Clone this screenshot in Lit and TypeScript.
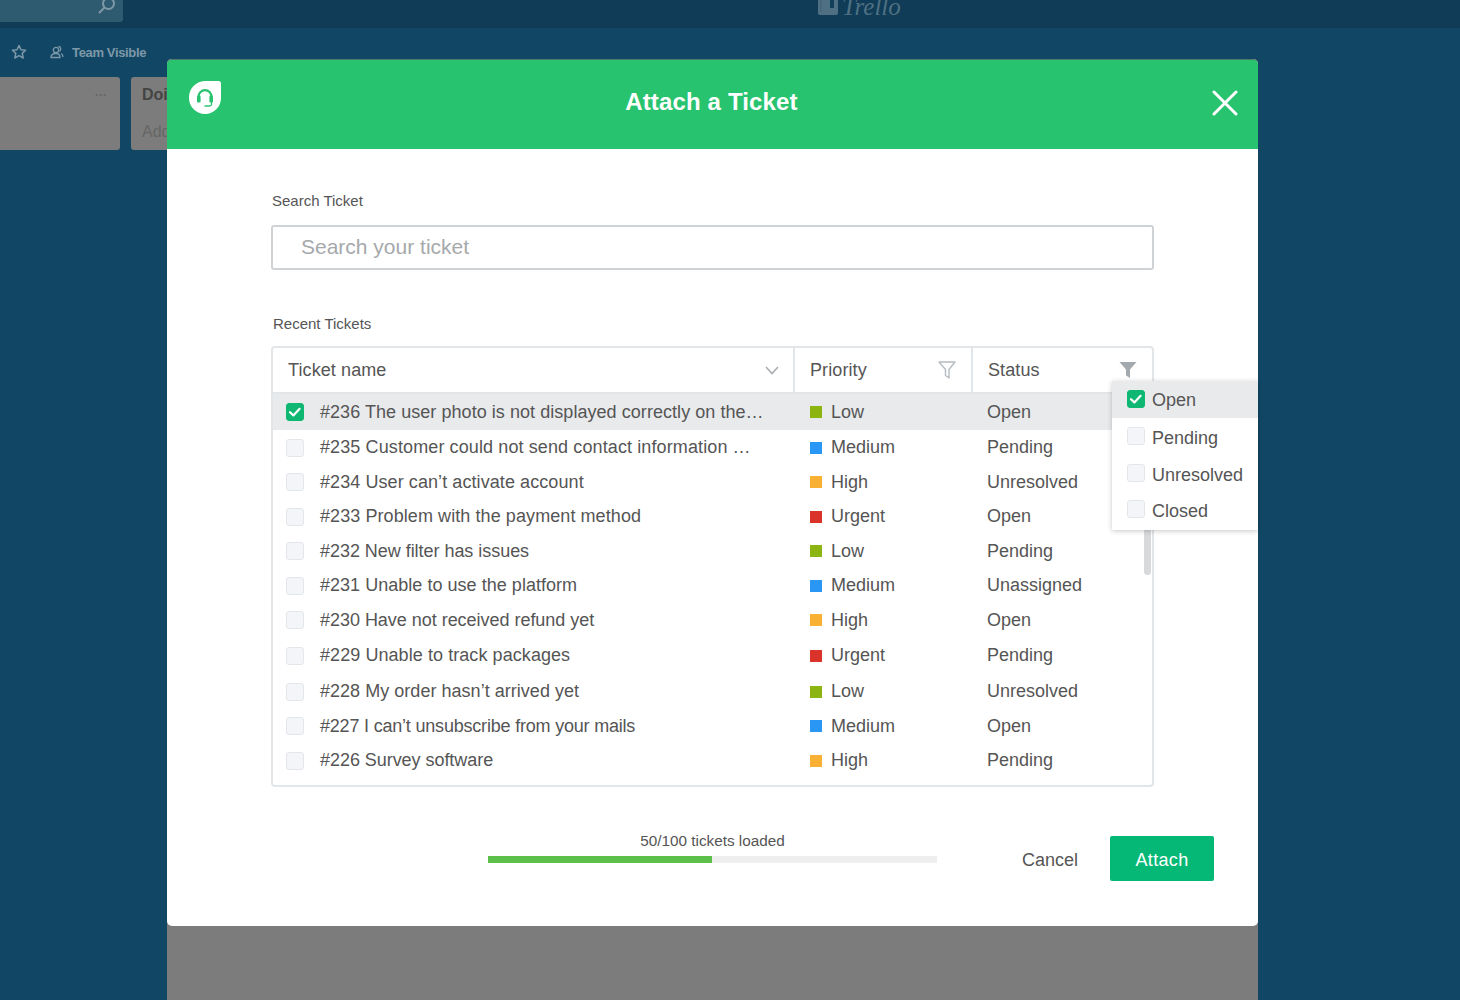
import { LitElement, html, css, svg } from 'lit';
import { customElement, state } from 'lit/decorators.js';

type Priority = 'Low' | 'Medium' | 'High' | 'Urgent';

interface Ticket {
  name: string;
  priority: Priority;
  status: string;
  height: number;
  tracking?: number;
}

const TICKETS: Ticket[] = [
  { name: '#236 The user photo is not displayed correctly on the…', priority: 'Low', status: 'Open', height: 36 },
  { name: '#235 Customer could not send contact information …', priority: 'Medium', status: 'Pending', height: 35, tracking: 0.11 },
  { name: '#234 User can’t activate account', priority: 'High', status: 'Unresolved', height: 34, tracking: 0.08 },
  { name: '#233 Problem with the payment method', priority: 'Urgent', status: 'Open', height: 35, tracking: 0.08 },
  { name: '#232 New filter has issues', priority: 'Low', status: 'Pending', height: 34, tracking: -0.04 },
  { name: '#231 Unable to use the platform', priority: 'Medium', status: 'Unassigned', height: 35, tracking: 0.03 },
  { name: '#230 Have not received refund yet', priority: 'High', status: 'Open', height: 34, tracking: -0.03 },
  { name: '#229 Unable to track packages', priority: 'Urgent', status: 'Pending', height: 37, tracking: 0.07 },
  { name: '#228 My order hasn’t arrived yet', priority: 'Low', status: 'Unresolved', height: 35, tracking: 0.03 },
  { name: '#227 I can’t unsubscribe from your mails', priority: 'Medium', status: 'Open', height: 34, tracking: -0.2 },
  { name: '#226 Survey software', priority: 'High', status: 'Pending', height: 35, tracking: -0.05 },
];

const STATUS_FILTERS = [
  { label: 'Open', checked: true, height: 37 },
  { label: 'Pending', checked: false, height: 38 },
  { label: 'Unresolved', checked: false, height: 36 },
  { label: 'Closed', checked: false, height: 36 },
];

const checkMark = svg`<path d="M4 9.2 L7.4 12.4 L13.6 5.8" fill="none" stroke="#fff" stroke-width="2.2" stroke-linecap="round" stroke-linejoin="round"/>`;

@customElement('app-root')
export class AppRoot extends LitElement {
  static styles = css`
    :host {
      display: block;
      position: relative;
      width: 1460px;
      height: 1000px;
      overflow: hidden;
      background: #114765;
      font-family: "Liberation Sans", Arial, sans-serif;
      color: #555;
    }

    .topbar {
      display: flex;
      height: 28px;
      background: #103c57;
      overflow: hidden;
    }
    .topsearch {
      display: flex;
      justify-content: flex-end;
      width: 123px;
      height: 22px;
      padding-right: 6px;
      box-sizing: border-box;
      background: #2f5b70;
      border-bottom-right-radius: 3px;
    }
    .topsearch svg { margin-top: -4px; }
    .brand {
      display: flex;
      align-items: flex-end;
      gap: 4px;
      height: 15px;
      margin-left: 695px;
      color: #4f7082;
    }
    .brand span {
      font: italic 25px/24px "Liberation Serif", serif;
      margin-bottom: -4px;
    }

    .boardbar {
      display: flex;
      align-items: center;
      height: 48px;
      padding: 0 0 1px 11px;
      color: #7d98a8;
      font-size: 13px;
      font-weight: bold;
      letter-spacing: -0.35px;
    }
    .boardbar .people { margin-left: 23px; margin-right: 8px; }

    .lists { display: flex; gap: 11px; }
    .list {
      height: 73px;
      background: #7b7c7b;
      border-radius: 3px;
      box-sizing: border-box;
    }
    .list-empty {
      display: flex;
      justify-content: flex-end;
      width: 120px;
      border-radius: 0 3px 3px 0;
      padding: 12px 13px 0 0;
      color: #666;
      font-size: 12px;
      font-weight: bold;
      line-height: 12px;
    }
    .list-doing {
      width: 240px;
      padding: 9px 11px;
      font-size: 16px;
      color: #666;
    }
    .list-doing b { display: block; color: #444; line-height: 18px; margin-bottom: 19px; }

    .sheet {
      position: absolute;
      left: 167px;
      top: 59px;
      width: 1091px;
      height: 941px;
      background: #7b7c7b;
      border-radius: 5px 5px 0 0;
    }
    .modal {
      position: relative;
      height: 867px;
      background: #fff;
      border-radius: 5px;
      box-sizing: border-box;
    }
    .modal-head {
      display: flex;
      align-items: flex-start;
      height: 90px;
      padding: 22px 20px 0 22px;
      box-sizing: border-box;
      background: #28c36f;
      border-radius: 5px 5px 0 0;
      border-top: 1px solid #4e7a6a;
    }
    .modal-head h1 {
      flex: 1;
      margin: 0;
      padding: 5px 10px 0 0;
      color: #fff;
      font-size: 24px;
      line-height: 30px;
      font-weight: bold;
      letter-spacing: 0.15px;
      text-align: center;
    }
    .logo { margin-top: -1px; }
    .close { margin-top: 8px; }

    .modal-body { padding: 42px 44px 0 104px; }

    .label {
      font-size: 15px;
      line-height: 20px;
      color: #555;
    }
    .label-search { margin-left: 1px; }
    .search {
      display: flex;
      align-items: center;
      width: 883px;
      height: 45px;
      margin: 14px 0 44px;
      padding: 0 0 2px 28px;
      box-sizing: border-box;
      border: 2px solid #cfd3d6;
      border-radius: 3px;
      color: #a6a9ab;
      font-size: 21px;
    }
    .label-recent { margin-left: 2px; margin-bottom: 12px; }

    .table {
      position: relative;
      width: 883px;
      height: 441px;
      box-sizing: border-box;
      border: 2px solid #e2e6e9;
      border-radius: 4px;
      font-size: 18px;
    }
    .thead {
      display: grid;
      grid-template-columns: 520px 178px 1fr;
      height: 44px;
      border-bottom: 2px solid #e2e6e9;
    }
    .th {
      display: flex;
      align-items: center;
      justify-content: space-between;
      padding: 0 14px 0 15px;
      box-sizing: border-box;
      letter-spacing: 0.1px;
    }
    .th + .th { border-left: 2px solid #e2e6e9; padding-right: 15px; }
    .row {
      display: grid;
      grid-template-columns: 521px 178px 1fr;
      align-items: center;
    }
    .row.selected { background: #e8eaec; }
    .name {
      display: flex;
      align-items: center;
      gap: 16px;
      padding-left: 13px;
      white-space: nowrap;
      letter-spacing: 0.05px;
    }
    .priority {
      display: flex;
      align-items: center;
      gap: 9px;
      padding-left: 16px;
    }
    .dot { width: 12px; height: 12px; }
    .dot.Low { background: #8cb512; }
    .dot.Medium { background: #2a97f5; }
    .dot.High { background: #f8b133; }
    .dot.Urgent { background: #d9332a; }
    .status { padding-left: 15px; }

    .box {
      display: block;
      flex: none;
      width: 18px;
      height: 18px;
      box-sizing: border-box;
      background: #f3f5f8;
      border: 1.5px solid #e3e6ea;
      border-radius: 3px;
    }
    .box.on { background: #0fb872; border-color: #0fb872; }
    .box svg { display: block; margin: -1px; }

    .scrollbar {
      position: absolute;
      right: 1px;
      top: 160px;
      width: 7px;
      height: 67px;
      border-radius: 4px;
      background: #d8d9da;
    }

    .popover {
      position: absolute;
      left: 945px;
      top: 322px;
      width: 146px;
      padding-bottom: 2px;
      background: #fff;
      box-shadow: 0 1px 5px rgba(0, 0, 0, 0.22);
      font-size: 18px;
    }
    .option {
      display: flex;
      align-items: center;
      gap: 7px;
      padding-left: 15px;
    }
    .option.on { background: #e8eaec; }
    .option .box { margin-bottom: 2px; }
    .option span:last-child { padding-top: 2px; }

    .footer { display: flex; align-items: flex-start; margin-top: 45px; padding-left: 217px; }
    .progress { width: 449px; }
    .progress-label {
      font-size: 15.3px;
      line-height: 18px;
      text-align: center;
      margin-bottom: 6px;
    }
    .track { height: 7px; background: #eee; }
    .fill { height: 100%; background: #5cbf4a; }
    .cancel {
      margin: 18px 32px 0 85px;
      font-size: 18px;
      line-height: 20px;
    }
    .attach {
      display: flex;
      align-items: center;
      justify-content: center;
      width: 104px;
      height: 42px;
      margin-top: 4px;
      padding-top: 3px;
      border-radius: 2px;
      background: #06b875;
      color: #fff;
      font-size: 18px;
      letter-spacing: 0.35px;
    }
  `;

  @state() private loaded = 50;
  @state() private total = 100;

  private renderBox(checked: boolean) {
    return html`<span class="box ${checked ? 'on' : ''}">
      ${checked ? html`<svg width="18" height="18" viewBox="0 0 18 18">${checkMark}</svg>` : ''}
    </span>`;
  }

  private renderRow(t: Ticket, i: number) {
    const tracking = t.tracking === undefined ? '' : `letter-spacing:${t.tracking}px`;
    return html`<div class="row ${i === 0 ? 'selected' : ''}" style="height:${t.height}px">
      <div class="name" style=${tracking}>${this.renderBox(i === 0)}<span>${t.name}</span></div>
      <div class="priority"><span class="dot ${t.priority}"></span>${t.priority}</div>
      <div class="status">${t.status}</div>
    </div>`;
  }

  render() {
    return html`
      <div class="topbar">
        <div class="topsearch">
          <svg width="20" height="20" viewBox="0 0 20 20" fill="none" stroke="#7d98a8" stroke-width="2">
            <circle cx="11.5" cy="7.5" r="5.5"/><path d="M7.5 11.5 L2.5 16.5" stroke-linecap="round"/>
          </svg>
        </div>
        <div class="brand">
          <svg width="20" height="20" viewBox="0 0 20 20">
            <rect x="0" y="0" width="20" height="20" rx="2" fill="#4f7082"/>
            <rect x="12" y="0" width="4" height="13" fill="#123f5a"/>
            <rect x="2" y="0" width="2" height="17" fill="#47677a"/>
          </svg>
          <span>Trello</span>
        </div>
      </div>

      <div class="boardbar">
        <svg width="16" height="16" viewBox="0 0 16 16" fill="none" stroke="#7d98a8" stroke-width="1.5" stroke-linejoin="round">
          <path d="M8 1.5 L10 5.8 L14.6 6.3 L11.2 9.4 L12.2 14 L8 11.6 L3.8 14 L4.8 9.4 L1.4 6.3 L6 5.8 Z"/>
        </svg>
        <svg class="people" width="14" height="14" viewBox="0 0 14 14" fill="none" stroke="#7d98a8" stroke-width="1.3">
          <circle cx="6" cy="5" r="2.7"/><path d="M1 12.5 C1 9.5 3 8.5 6 8.5 C9 8.5 10 9.5 10 12.5 Z"/>
          <path d="M8.5 1.5 C11 1.5 11.5 5 9.5 6.5 M11 8.5 C12.5 9 13 10.5 13 12"/>
        </svg>
        Team Visible
      </div>

      <div class="lists">
        <div class="list list-empty">···</div>
        <div class="list list-doing"><b>Doing</b>Add a card</div>
      </div>

      <div class="sheet">
        <div class="modal">
          <div class="modal-head">
            <svg class="logo" width="32" height="33" viewBox="0 0 32 33">
              <path d="M15.5 0 H29.5 Q32 0 32 2.5 V17 A16 16 0 0 1 0 17 A16.5 16.5 0 0 1 15.5 0 Z" fill="#fff"/>
              <path d="M9.6 17 V15.5 a6.4 6.4 0 0 1 12.8 0 V17" fill="none" stroke="#28c36f" stroke-width="2.2"/>
              <rect x="8" y="14.5" width="3.6" height="7" rx="1.2" fill="#28c36f"/>
              <rect x="20.4" y="14.5" width="3.6" height="7" rx="1.2" fill="#28c36f"/>
              <path d="M22.5 21 V23.5 Q22.5 25 20.5 25 H15.5" fill="none" stroke="#28c36f" stroke-width="1.3"/>
            </svg>
            <h1>Attach a Ticket</h1>
            <svg class="close" width="26" height="26" viewBox="0 0 26 26" stroke="#fff" stroke-width="3" stroke-linecap="round">
              <path d="M2 2 L24 24 M24 2 L2 24"/>
            </svg>
          </div>

          <div class="modal-body">
            <div class="label label-search">Search Ticket</div>
            <div class="search">Search your ticket</div>
            <div class="label label-recent">Recent Tickets</div>

            <div class="table">
              <div class="thead">
                <div class="th">Ticket name
                  <svg width="14" height="9" viewBox="0 0 14 9" fill="none" stroke="#a9adb2" stroke-width="1.6">
                    <path d="M1 1 L7 7.5 L13 1"/>
                  </svg>
                </div>
                <div class="th">Priority
                  <svg width="18" height="18" viewBox="0 0 18 18" fill="none" stroke="#b5bbc0" stroke-width="1.4" stroke-linejoin="round">
                    <path d="M1 1 H17 L11 8.5 V17 L7.5 14.5 V8.5 Z"/>
                  </svg>
                </div>
                <div class="th">Status
                  <svg width="18" height="18" viewBox="0 0 18 18" fill="#a3a9ad">
                    <path d="M0.5 1 H17.5 L11 8.5 V17 L7 14.5 V8.5 Z"/>
                  </svg>
                </div>
              </div>
              ${TICKETS.map((t, i) => this.renderRow(t, i))}
              <div class="scrollbar"></div>
            </div>

            <div class="footer">
              <div class="progress">
                <div class="progress-label">${this.loaded}/${this.total} tickets loaded</div>
                <div class="track"><div class="fill" style="width:${(this.loaded / this.total) * 100}%"></div></div>
              </div>
              <div class="cancel">Cancel</div>
              <div class="attach">Attach</div>
            </div>
          </div>

          <div class="popover">
            ${STATUS_FILTERS.map(
              (f) => html`<div class="option ${f.checked ? 'on' : ''}" style="height:${f.height}px">
                ${this.renderBox(f.checked)}<span>${f.label}</span>
              </div>`
            )}
          </div>
        </div>
      </div>
    `;
  }
}
